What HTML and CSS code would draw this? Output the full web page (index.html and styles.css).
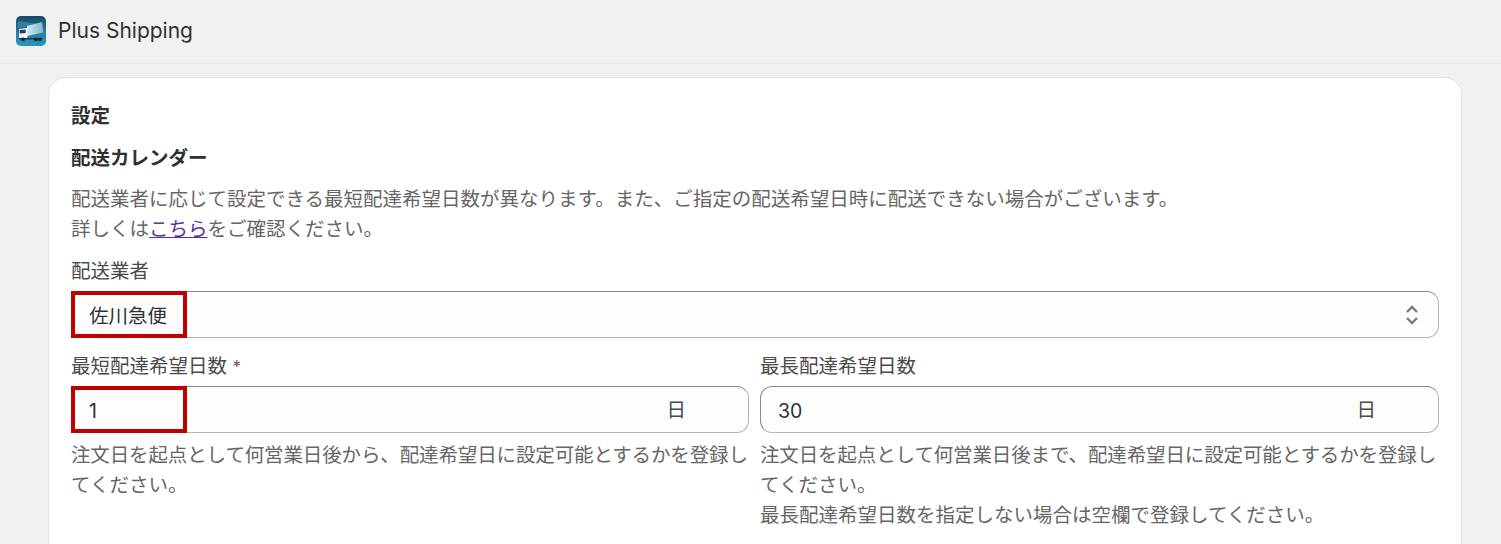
FILE: index.html
```html
<!DOCTYPE html>
<html lang="ja">
<head>
<meta charset="utf-8">
<title>Plus Shipping</title>
<link rel="stylesheet" href="styles.css">
</head>
<body>
<header class="topbar">
  <svg class="logo" viewBox="0 0 30 30" aria-hidden="true">
    <defs>
      <linearGradient id="bg" x1="0" y1="0" x2="0" y2="1">
        <stop offset="0" stop-color="#174a68"/>
        <stop offset="0.6" stop-color="#2a7fa6"/>
        <stop offset="1" stop-color="#2398bf"/>
      </linearGradient>
      <linearGradient id="trailer" x1="0" y1="0" x2="1" y2="0">
        <stop offset="0" stop-color="#d5e9f0"/>
        <stop offset="1" stop-color="#7fb4c9"/>
      </linearGradient>
    </defs>
    <rect width="30" height="30" rx="5" fill="url(#bg)"/>
    <path d="M2 5 L22 8 L2 12Z" fill="#2f7fa3"/>
    <path d="M11 10 L26 6 L27.5 16.5 L11 20Z" fill="url(#trailer)"/>
    <path d="M3 13 L11 12 L11.5 22 L3 22Z" fill="#f4f7f9"/>
    <path d="M3.6 14 L9.6 13.4 L9.8 17 L3.6 17.4Z" fill="#23465e"/>
    <path d="M3 22 H26 V23.4 H3Z" fill="#143245"/>
    <circle cx="7" cy="23.4" r="1.8" fill="#0f222d"/>
    <circle cx="20" cy="23.4" r="1.8" fill="#0f222d"/>
    <circle cx="24" cy="23.4" r="1.8" fill="#0f222d"/>
  </svg>
  <span class="app-name">Plus Shipping</span>
</header>
<main class="page">
  <section class="card">
    <h2 class="title">設定</h2>
    <h3 class="subtitle">配送カレンダー</h3>
    <p class="desc">配送業者に応じて設定できる最短配達希望日数が異なります。また、ご指定の配送希望日時に配送できない場合がございます。<br>詳しくは<a class="link" href="#">こちら</a>をご確認ください。</p>
    <div class="field carrier">
      <div class="label">配送業者</div>
      <div class="control">
        <span class="value">佐川急便</span>
        <svg class="chevrons" viewBox="0 0 14 22" aria-hidden="true"><path d="M2 8 L7 3 L12 8 M2 14 L7 19 L12 14"/></svg>
        <span class="marker"></span>
      </div>
    </div>
    <div class="columns">
      <div class="field">
        <div class="label">最短配達希望日数 <span class="req">*</span></div>
        <div class="control">
          <span class="value">1</span>
          <span class="suffix">日</span>
          <span class="marker"></span>
        </div>
        <p class="help"><span class="fit">注文日を起点として何営業日後から、配達希望日に設定可能とするかを登録し</span>てください。</p>
      </div>
      <div class="field">
        <div class="label">最長配達希望日数</div>
        <div class="control">
          <span class="value">30</span>
          <span class="suffix">日</span>
        </div>
        <p class="help"><span class="fit">注文日を起点として何営業日後まで、配達希望日に設定可能とするかを登録し</span>てください。<br>最長配達希望日数を指定しない場合は空欄で登録してください。</p>
      </div>
    </div>
  </section>
</main>
</body>
</html>
```
FILE: styles.css
```css
* { box-sizing: border-box; }
html, body { height: 100%; }
body {
  margin: 0;
  overflow: hidden;
  background: #f1f1f1;
  color: #303030;
  font-family: Inter, "Noto Sans CJK JP", sans-serif;
  font-size: 19.5px;
  line-height: 30px;
}
.topbar {
  display: flex;
  align-items: center;
  gap: 12px;
  height: 64px;
  padding: 0 16px 1px;
  border-bottom: 1px solid #ebebeb;
}
.logo { width: 30px; height: 30px; flex: none; }
.app-name { font-size: 21px; color: #303030; }
.page { padding: 13px 39px 0 48px; }
.card {
  background: #fff;
  border: 1px solid #e3e3e3;
  border-radius: 18px;
  padding: 23px 22px 40px 22px;
  height: 600px;
}
.title, .subtitle {
  margin: 0;
  font-size: 19.5px;
  line-height: 30px;
  font-weight: 700;
}
.title { margin-bottom: 12px; }
.subtitle { margin-bottom: 11px; }
.desc { margin: 0 0 12px; color: #666; }
.link { color: #5c2f9e; text-decoration: underline; }
.label { color: #4a4a4a; height: 30px; margin-bottom: 5px; }
.req { color: #6b5a55; font-size: 17px; }
.control {
  position: relative;
  display: flex;
  align-items: center;
  justify-content: space-between;
  height: 47px;
  padding: 0 17px;
  background: #fdfdfd;
  border: 1px solid #8a8a8a;
  border-bottom-color: #b5b5b5;
  border-right-color: #b5b5b5;
  border-radius: 12px;
  color: #303030;
}
.value { margin-top: 2px; }
.chevrons { width: 14px; height: 22px; margin-right: 2px; fill: none; stroke: #7a7a7a; stroke-width: 2.4; }
.suffix { margin-right: 45px; color: #4a4a4a; }
.marker {
  position: absolute;
  left: -1px;
  top: -1px;
  width: 116px;
  height: 47px;
  border: 4px solid #c00000;
}
.carrier { margin-bottom: 13px; }
.columns {
  display: grid;
  grid-template-columns: 678px 679px;
  gap: 11px;
}
.help { margin: 7px 0 0; color: #666; }
.fit { letter-spacing: -0.13px; }
```
